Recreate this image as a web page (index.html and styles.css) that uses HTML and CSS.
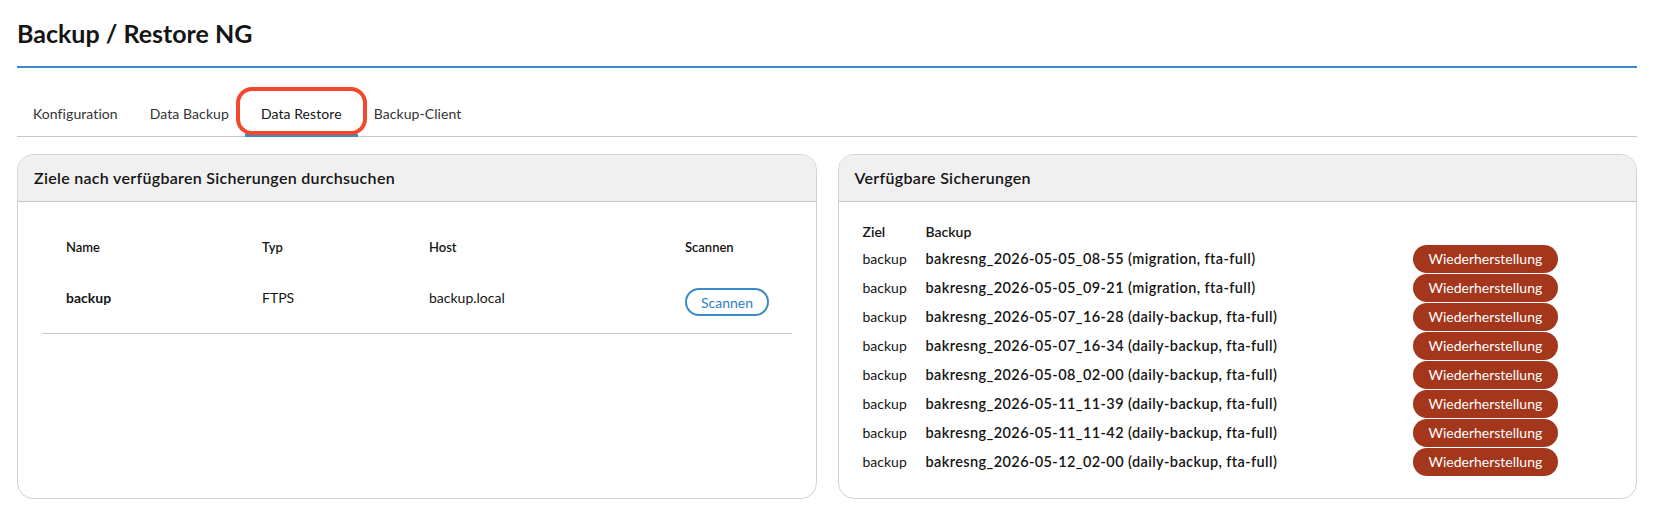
FILE: index.html
```html
<!DOCTYPE html>
<html lang="de">
<head>
    <meta charset="UTF-8">
    <meta name="viewport" content="width=device-width, initial-scale=1.0">
    <title>Backup / Restore NG</title>
    <link rel="stylesheet" href="styles.css">
</head>
<body>
    <div class="page">
        <h1 class="page-title">Backup / Restore NG</h1>

        <nav class="tabs">
            <a class="tab">Konfiguration</a>
            <a class="tab">Data Backup</a>
            <a class="tab active">Data Restore<span class="highlight"></span></a>
            <a class="tab">Backup-Client</a>
        </nav>

        <div class="panels">
            <section class="card">
                <div class="card-header">Ziele nach verfügbaren Sicherungen durchsuchen</div>
                <div class="card-body">
                    <table class="targets">
                        <thead>
                            <tr>
                                <th class="col-name">Name</th>
                                <th class="col-type">Typ</th>
                                <th class="col-host">Host</th>
                                <th>Scannen</th>
                            </tr>
                        </thead>
                        <tbody>
                            <tr>
                                <td class="target-name">backup</td>
                                <td>FTPS</td>
                                <td>backup.local</td>
                                <td class="scan-cell"><button class="btn-scan">Scannen</button></td>
                            </tr>
                        </tbody>
                    </table>
                </div>
            </section>

            <section class="card">
                <div class="card-header">Verfügbare Sicherungen</div>
                <div class="card-body backups-body">
                    <table class="backups">
                        <thead>
                            <tr>
                                <th class="col-target">Ziel</th>
                                <th class="col-backup">Backup</th>
                                <th></th>
                            </tr>
                        </thead>
                        <tbody>
                            <tr>
                                <td>backup</td>
                                <td class="backup-name">bakresng_2026-05-05_08-55 (migration, fta-full)</td>
                                <td><button class="btn-restore">Wiederherstellung</button></td>
                            </tr>
                            <tr>
                                <td>backup</td>
                                <td class="backup-name">bakresng_2026-05-05_09-21 (migration, fta-full)</td>
                                <td><button class="btn-restore">Wiederherstellung</button></td>
                            </tr>
                            <tr>
                                <td>backup</td>
                                <td class="backup-name">bakresng_2026-05-07_16-28 (daily-backup, fta-full)</td>
                                <td><button class="btn-restore">Wiederherstellung</button></td>
                            </tr>
                            <tr>
                                <td>backup</td>
                                <td class="backup-name">bakresng_2026-05-07_16-34 (daily-backup, fta-full)</td>
                                <td><button class="btn-restore">Wiederherstellung</button></td>
                            </tr>
                            <tr>
                                <td>backup</td>
                                <td class="backup-name">bakresng_2026-05-08_02-00 (daily-backup, fta-full)</td>
                                <td><button class="btn-restore">Wiederherstellung</button></td>
                            </tr>
                            <tr>
                                <td>backup</td>
                                <td class="backup-name">bakresng_2026-05-11_11-39 (daily-backup, fta-full)</td>
                                <td><button class="btn-restore">Wiederherstellung</button></td>
                            </tr>
                            <tr>
                                <td>backup</td>
                                <td class="backup-name">bakresng_2026-05-11_11-42 (daily-backup, fta-full)</td>
                                <td><button class="btn-restore">Wiederherstellung</button></td>
                            </tr>
                            <tr>
                                <td>backup</td>
                                <td class="backup-name">bakresng_2026-05-12_02-00 (daily-backup, fta-full)</td>
                                <td><button class="btn-restore">Wiederherstellung</button></td>
                            </tr>
                        </tbody>
                    </table>
                </div>
            </section>
        </div>
    </div>
</body>
</html>
```

FILE: styles.css
```css
body {
    margin: 0;
    font-family: Lato, "Noto Sans", sans-serif;
    font-size: 14px;
    color: #151515;
    background: #fff;
}
.page {
    padding: 0 20px 0 17px;
}
.page-title {
    margin: 16px 0 0;
    padding-bottom: 16px;
    font-size: 25px;
    line-height: 34px;
    font-weight: 700;
    border-bottom: 2px solid #3b8bca;
}
.tabs {
    display: flex;
    margin-top: 24px;
    border-bottom: 1px solid #c7c7c7;
}
.tab {
    position: relative;
    padding: 12px 16px 10px;
    line-height: 20px;
    border-bottom: 3px solid transparent;
    margin-bottom: -1px;
    color: #333;
    letter-spacing: 0.08px;
}
.tab.active {
    border-bottom-color: #3b8bca;
    color: #151515;
}
.highlight {
    position: absolute;
    left: -9px;
    right: -9px;
    top: -5px;
    bottom: -1px;
    border: 4px solid #f4472b;
    border-radius: 16px;
}
.panels {
    display: grid;
    grid-template-columns: 1fr 1fr;
    gap: 21px;
    margin-top: 17px;
}
.card {
    border: 1px solid #d2d2d2;
    border-radius: 16px;
    overflow: hidden;
    background: #fff;
}
.card-header {
    height: 46px;
    line-height: 46px;
    padding: 0 16px;
    background: #f0f0f0;
    border-bottom: 1px solid #c7c7c7;
    font-size: 16px;
    font-weight: 600;
    letter-spacing: 0.3px;
}
.card-body {
    padding: 24px;
}
table {
    border-collapse: collapse;
}
.targets {
    width: 100%;
}
.targets th {
    height: 42px;
    padding: 0 0 0 24px;
    text-align: left;
    font-size: 13px;
    font-weight: 600;
}
.targets .col-name { width: 172px; }
.targets .col-type { width: 143px; }
.targets .col-host { width: 232px; }
.targets tbody tr {
    height: 65px;
}
.targets td {
    padding: 21px 0 0 24px;
    line-height: 18px;
    vertical-align: top;
    border-bottom: 1px solid #c7c7c7;
}
.targets .scan-cell {
    padding-top: 20px;
}
.target-name {
    font-weight: 700;
}
.btn-scan {
    display: block;
    height: 28px;
    padding: 0 14px;
    border: 2px solid #3b8bca;
    border-radius: 14px;
    background: #fff;
    color: #2f7fc0;
    font-family: inherit;
    font-size: 14px;
}
.backups-body {
    padding: 16px 16px 22px;
}
.backups th {
    height: 26px;
    padding: 0 8px;
    text-align: left;
    font-weight: 600;
}
.backups .col-target { width: 47px; }
.backups .col-backup { width: 471px; }
.backups td {
    height: 29px;
    padding: 0 8px;
}
.backup-name {
    font-size: 14.5px;
    font-weight: 600;
    letter-spacing: 0.4px;
}
.btn-restore {
    height: 28px;
    padding: 0 16px;
    border: none;
    border-radius: 14px;
    background: #a3361b;
    color: #fff;
    font-family: inherit;
    font-size: 14px;
}
```
